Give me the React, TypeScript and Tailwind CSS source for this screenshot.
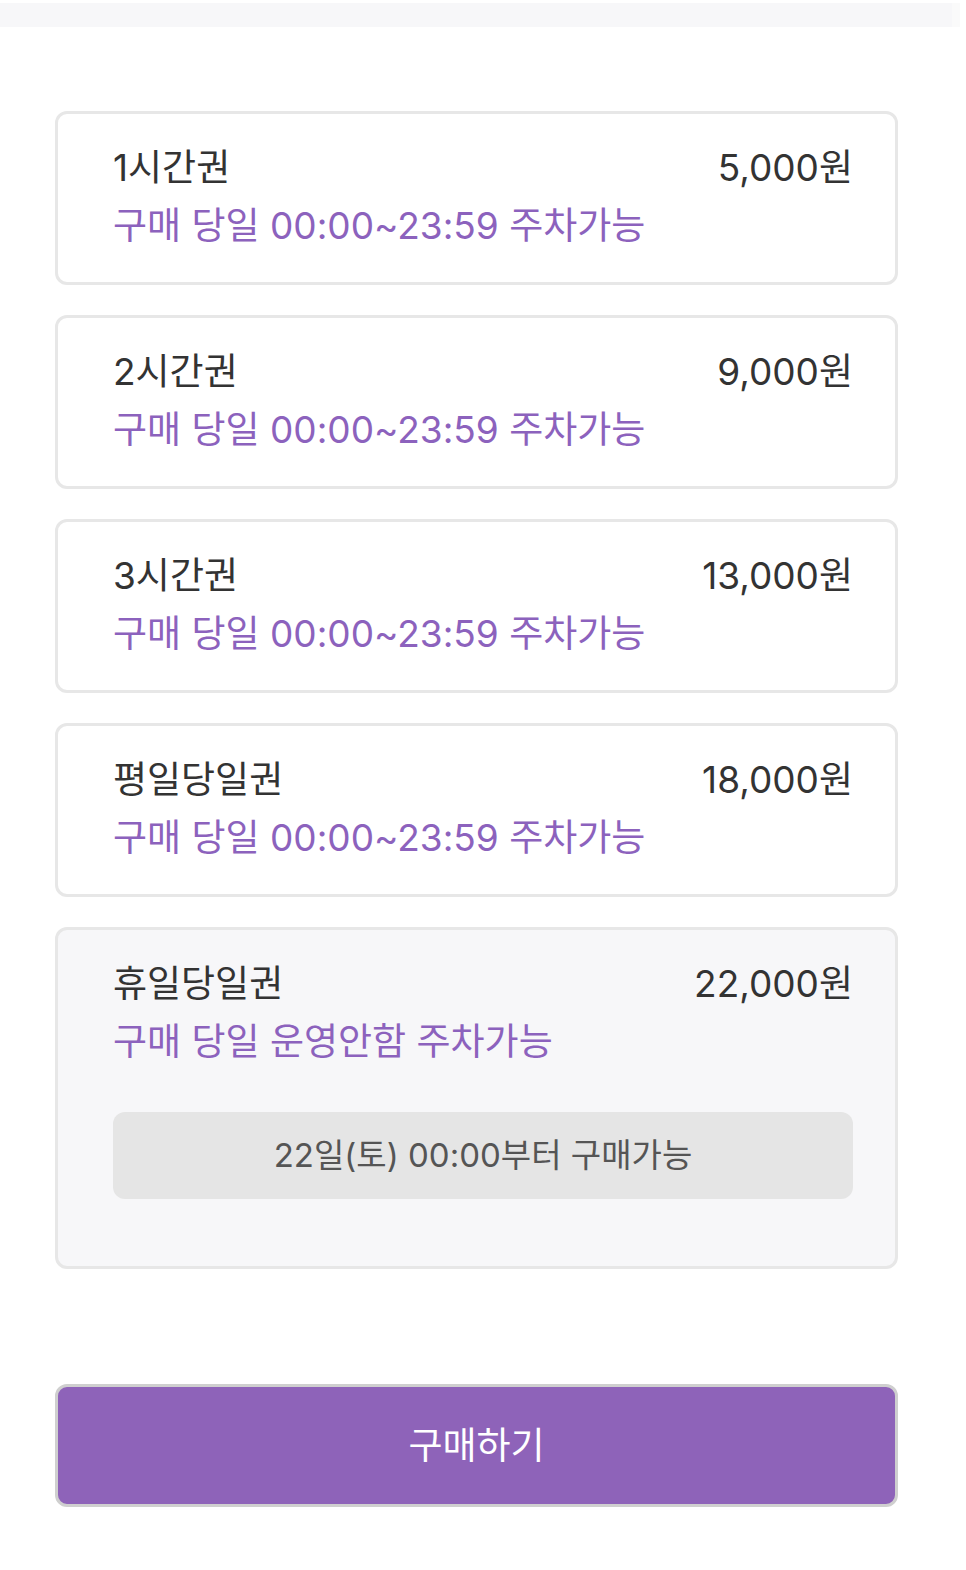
import React from 'react';

interface Ticket {
  name: string;
  price: string;
  desc: string;
  notice?: string;
}

const tickets: Ticket[] = [
  { name: '1시간권', price: '5,000원', desc: '구매 당일 00:00~23:59 주차가능' },
  { name: '2시간권', price: '9,000원', desc: '구매 당일 00:00~23:59 주차가능' },
  { name: '3시간권', price: '13,000원', desc: '구매 당일 00:00~23:59 주차가능' },
  { name: '평일당일권', price: '18,000원', desc: '구매 당일 00:00~23:59 주차가능' },
  {
    name: '휴일당일권',
    price: '22,000원',
    desc: '구매 당일 운영안함 주차가능',
    notice: '22일(토) 00:00부터 구매가능',
  },
];

export default function App() {
  return (
    <div
      className="min-h-[1570px] w-full bg-white pt-[3px]"
      style={{ fontFamily: 'Inter, "Noto Sans CJK KR", "Noto Sans", sans-serif' }}
    >
      {/* top strip */}
      <div className="flex h-[24px] w-full">
        <div className="h-full w-[952px] bg-[#f7f7f9]" />
        <div className="h-full w-[8px] bg-[#fafafa]" />
      </div>

      <div className="flex flex-col gap-[30px] pl-[55px] pr-[68px] pt-[84px]">
        {tickets.map((t) => (
          <div
            key={t.name}
            className={`rounded-[12px] border-[3px] border-[#e7e7e7] pl-[55px] pr-[42px] pt-[25px] ${
              t.notice ? 'bg-[#f7f7f9] pb-[67px]' : 'bg-white pb-[27px]'
            }`}
          >
            <div className="flex items-center justify-between text-[37px] leading-[58px] text-[#333333]">
              <span>{t.name}</span>
              <span>{t.price}</span>
            </div>
            <div className="text-[37px] leading-[58px] text-[#8c62bd]">{t.desc}</div>
            {t.notice && (
              <div className="mt-[41px] flex h-[87px] items-center justify-center rounded-[12px] bg-[#e5e5e5] text-[33px] text-[#555555]">
                {t.notice}
              </div>
            )}
          </div>
        ))}
      </div>

      <div className="pl-[55px] pr-[68px] pt-[115px]">
        <button className="flex h-[123px] w-full items-center justify-center rounded-[12px] border-[3px] border-[#cfcfcf] bg-[#8e63b9] text-[37px] text-white">
          구매하기
        </button>
      </div>
    </div>
  );
}
